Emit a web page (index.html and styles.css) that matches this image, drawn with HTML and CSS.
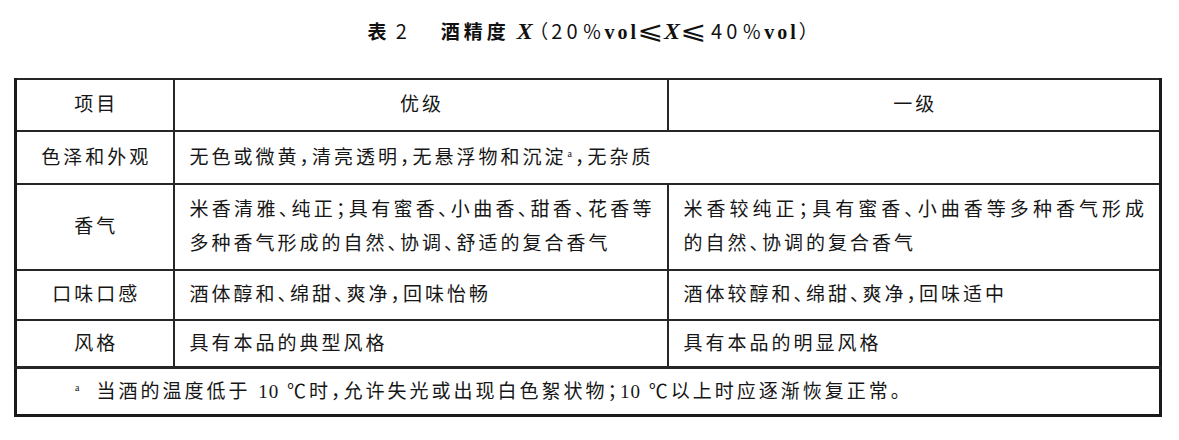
FILE: index.html
```html
<!DOCTYPE html>
<html lang="zh-CN">
<head>
<meta charset="utf-8">
<title>表2 酒精度</title>
<link rel="stylesheet" href="styles.css">
</head>
<body>
<div class="title">
  <span class="t-zh">表</span><span class="t-num t-two">2</span><span class="t-zh t-gap">酒精度</span><span class="t-x t-x1">X</span><span class="t-par">（</span><span class="t-num">20</span><span class="t-pc">％</span><span class="t-vol">vol</span><span class="t-le">⩽</span><span class="t-x t-x2">X</span><span class="t-le t-le2">⩽</span><span class="t-num">40</span><span class="t-pc">％</span><span class="t-vol">vol</span><span class="t-par">）</span>
</div>
<table class="spec">
  <colgroup>
    <col class="c1">
    <col class="c2">
    <col class="c3">
  </colgroup>
  <tr class="r-head">
    <td class="item">项目</td>
    <td class="center">优级</td>
    <td class="center">一级</td>
  </tr>
  <tr class="r-color">
    <td class="item">色泽和外观</td>
    <td class="desc" colspan="2">无色或微黄，清亮透明，无悬浮物和沉淀<sup class="fn">a</sup>，无杂质</td>
  </tr>
  <tr class="r-aroma">
    <td class="item">香气</td>
    <td class="desc"><span class="ln just">米香清雅、纯正；具有蜜香、小曲香、甜香、花香等</span><span class="ln">多种香气形成的自然、协调、舒适的复合香气</span></td>
    <td class="desc"><span class="ln just">米香较纯正；具有蜜香、小曲香等多种香气形成</span><span class="ln">的自然、协调的复合香气</span></td>
  </tr>
  <tr class="r-taste">
    <td class="item">口味口感</td>
    <td class="desc">酒体醇和、绵甜、爽净，回味怡畅</td>
    <td class="desc">酒体较醇和、绵甜、爽净，回味适中</td>
  </tr>
  <tr class="r-style">
    <td class="item">风格</td>
    <td class="desc">具有本品的典型风格</td>
    <td class="desc">具有本品的明显风格</td>
  </tr>
  <tr class="r-note">
    <td class="note" colspan="3"><sup class="fn fn-note">a</sup>当酒的温度低于 <span class="lat">10</span> ℃时，允许失光或出现白色絮状物；<span class="lat">10</span> ℃以上时应逐渐恢复正常。</td>
  </tr>
</table>
</body>
</html>
```

FILE: styles.css
```css
html, body {
  margin: 0;
  padding: 0;
  background: #ffffff;
}

body {
  width: 1179px;
  height: 440px;
  color: #161616;
  font-family: "Liberation Serif", "Noto Sans CJK SC", serif;
}

.title {
  height: 78px;
  padding-top: 17px;
  box-sizing: border-box;
  display: flex;
  justify-content: center;
  align-items: baseline;
  font-size: 19px;
  line-height: 28px;
  color: #111;
  font-feature-settings: "halt" 1;
}

.t-zh {
  font-family: "Noto Sans CJK SC", sans-serif;
  font-weight: 700;
  letter-spacing: 4px;
}

.t-two {
  margin-left: 5px;
}

.t-gap {
  margin-left: 30px;
}

.t-num {
  font-family: "Noto Sans CJK SC", sans-serif;
  font-weight: 400;
  font-size: 20px;
  letter-spacing: 4px;
}

.t-x {
  font-family: "Liberation Serif", serif;
  font-weight: 700;
  font-style: italic;
  font-size: 24px;
}

.t-x1 {
  margin: 0 6px 0 7px;
}

.t-x2 {
  margin: 0 3px 0 3px;
}

.t-par {
  font-family: "Noto Sans CJK SC", sans-serif;
  font-weight: 400;
  font-size: 19px;
  margin: 0 3px 0 0;
}

.t-pc {
  font-family: "Noto Sans CJK SC", sans-serif;
  font-weight: 400;
  font-size: 19px;
  margin: 0 3px 0 1px;
}

.t-vol {
  font-family: "Liberation Serif", serif;
  font-weight: 700;
  font-size: 20px;
  letter-spacing: 3px;
}

.t-le {
  display: inline-block;
  width: 21px;
  text-align: center;
  font-family: "DejaVu Sans", "Noto Sans CJK SC", sans-serif;
  font-weight: 400;
  font-size: 25px;
  transform: scaleX(1.25);
  margin: 0 0 0 1px;
}

.t-le2 {
  margin: 0 7px 0 0;
}

.spec {
  margin-left: 14px;
  border-collapse: collapse;
  table-layout: fixed;
  width: 1145px;
  border-top: 2px solid #1a1a1a;
  border-left: 3px solid #1a1a1a;
  border-right: 3px solid #1a1a1a;
  border-bottom: 3px solid #1a1a1a;
  font-size: 19px;
  font-feature-settings: "halt" 1;
}

.c1 { width: 158px; }
.c2 { width: 494px; }
.c3 { width: 493px; }

.spec td {
  border: 2px solid #262626;
  padding: 0;
  vertical-align: middle;
  letter-spacing: 3px;
  line-height: 34px;
  font-family: "Liberation Serif", "Noto Sans CJK SC", serif;
}

.r-head td { height: 50px; }
.r-color td { height: 51px; }
.r-aroma td { height: 84px; }
.r-taste td { height: 48px; }
.r-style td { height: 45px; }
.r-note td { height: 45px; border-top-width: 3px; }

.item,
.center {
  text-align: center;
  padding-left: 3px !important;
}

.desc {
  padding: 0 15px 0 15px !important;
  text-align: left;
}

.ln {
  display: block;
}

.just {
  text-align: justify;
  text-align-last: justify;
  margin-right: -3px;
}

.fn {
  font-family: "Liberation Serif", serif;
  font-size: 10px;
  line-height: 0;
  vertical-align: 7px;
  letter-spacing: 0;
  margin: 0 3px 0 1px;
}

.note {
  padding-left: 58px !important;
  text-align: left;
}

.fn-note {
  margin: 0 17px 0 0;
}

.lat {
  font-family: "Liberation Serif", serif;
  letter-spacing: 1px;
}
```
